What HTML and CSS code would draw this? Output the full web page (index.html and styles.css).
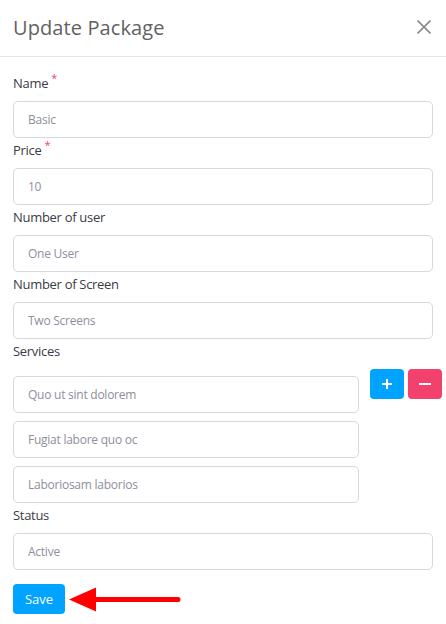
FILE: index.html
```html
<!DOCTYPE html>
<html lang="en">
<head>
<meta charset="utf-8">
<title>Update Package</title>
<link rel="stylesheet" href="styles.css">
</head>
<body>
<div class="modal">
  <header class="modal-header">
    <h2 class="modal-title">Update Package</h2>
    <button class="close-btn" aria-label="Close">
      <svg width="14" height="14" viewBox="0 0 14 14"><path d="M0.5 0.5 L13.5 13.5 M13.5 0.5 L0.5 13.5" stroke="#8a8a8a" stroke-width="1.6" fill="none"/></svg>
    </button>
  </header>
  <form class="modal-body">
    <div class="field">
      <label class="label">Name<span class="req">*</span></label>
      <input class="input" type="text" placeholder="Basic">
    </div>
    <div class="field">
      <label class="label">Price<span class="req">*</span></label>
      <input class="input" type="text" placeholder="10">
    </div>
    <div class="field">
      <label class="label">Number of user</label>
      <input class="input" type="text" placeholder="One User">
    </div>
    <div class="field">
      <label class="label">Number of Screen</label>
      <input class="input" type="text" placeholder="Two Screens">
    </div>
    <div class="field">
      <label class="label">Services</label>
      <div class="services">
        <div class="service-list">
          <input class="input" type="text" placeholder="Quo ut sint dolorem">
          <input class="input" type="text" placeholder="Fugiat labore quo oc">
          <input class="input" type="text" placeholder="Laboriosam laborios">
        </div>
        <div class="service-actions">
          <button type="button" class="icon-btn add">
            <svg width="12" height="12" viewBox="0 0 12 12"><path d="M6 1 V11 M1 6 H11" stroke="#fff" stroke-width="2" fill="none"/></svg>
          </button>
          <button type="button" class="icon-btn remove">
            <svg width="14" height="12" viewBox="0 0 14 12"><path d="M1 6 H13" stroke="#fff" stroke-width="2" fill="none"/></svg>
          </button>
        </div>
      </div>
    </div>
    <div class="field">
      <label class="label">Status</label>
      <input class="input" type="text" placeholder="Active">
    </div>
    <div class="footer">
      <button type="button" class="save-btn">Save</button>
      <svg class="arrow" width="118" height="26" viewBox="0 0 118 26">
        <polygon points="0,12.5 27,0.5 27,24.5" fill="#ff0000"/>
        <line x1="25" y1="12.5" x2="109" y2="12.5" stroke="#ff0000" stroke-width="5" stroke-linecap="round"/>
      </svg>
    </div>
  </form>
</div>
</body>
</html>
```

FILE: styles.css
```css
* { box-sizing: border-box; }
html, body { margin: 0; padding: 0; background: #fff; }
body {
  font-family: "Open Sans", "Noto Sans", sans-serif;
  color: #3f4254;
}
.modal {
  width: 446px;
  background: #fff;
}
.modal-header {
  height: 57px;
  display: flex;
  align-items: center;
  justify-content: space-between;
  padding: 0 14px 0 13px;
  border-bottom: 1px solid #e4e6ef;
}
.modal-title {
  margin: 0;
  font-size: 20px;
  font-weight: 500;
  color: #626262;
  letter-spacing: 0.1px;
  line-height: 1;
}
.close-btn {
  background: none;
  border: 0;
  padding: 0;
  width: 16px;
  height: 16px;
  display: flex;
  align-items: center;
  justify-content: center;
  margin-top: -2px;
}
.modal-body {
  padding: 16px 13px 0 13px;
}
.field {
  margin-bottom: 2px;
}
.label {
  display: block;
  font-size: 13px;
  line-height: 20px;
  height: 20px;
  font-weight: 500;
  color: #3a3b45;
  letter-spacing: -0.3px;
  margin-bottom: 8px;
}
.req {
  color: #f1416c;
  font-size: 11px;
  line-height: 1;
  position: relative;
  top: -6px;
  margin-left: 3px;
}
.input {
  display: block;
  width: 100%;
  height: 37px;
  border: 1px solid #d5d8de;
  border-radius: 5px;
  padding: 0 14px;
  font-family: inherit;
  font-size: 12px;
  letter-spacing: -0.25px;
  color: #3f4254;
  background: #fff;
  outline: none;
}
.input::placeholder { color: #8e8f9c; }
.services {
  display: flex;
  align-items: flex-start;
}
.service-list {
  width: 346px;
  flex: none;
  display: flex;
  flex-direction: column;
  gap: 8px;
  padding-top: 7px;
}
.service-actions {
  display: flex;
  gap: 4px;
  margin-left: 11px;
}
.icon-btn {
  width: 34px;
  height: 30px;
  border: 0;
  border-radius: 4px;
  padding: 0;
  display: flex;
  align-items: center;
  justify-content: center;
}
.icon-btn.add { background: #00a3ff; }
.icon-btn.remove { background: #f1416c; }
.footer {
  display: flex;
  align-items: center;
  margin-top: 14px;
}
.save-btn {
  width: 52px;
  height: 30px;
  background: #00a3ff;
  color: #fff;
  border: 0;
  border-radius: 4px;
  font-family: inherit;
  font-size: 13px;
  font-weight: 500;
  padding: 0;
}
.arrow {
  margin-left: 4px;
  margin-top: 1px;
}
```
